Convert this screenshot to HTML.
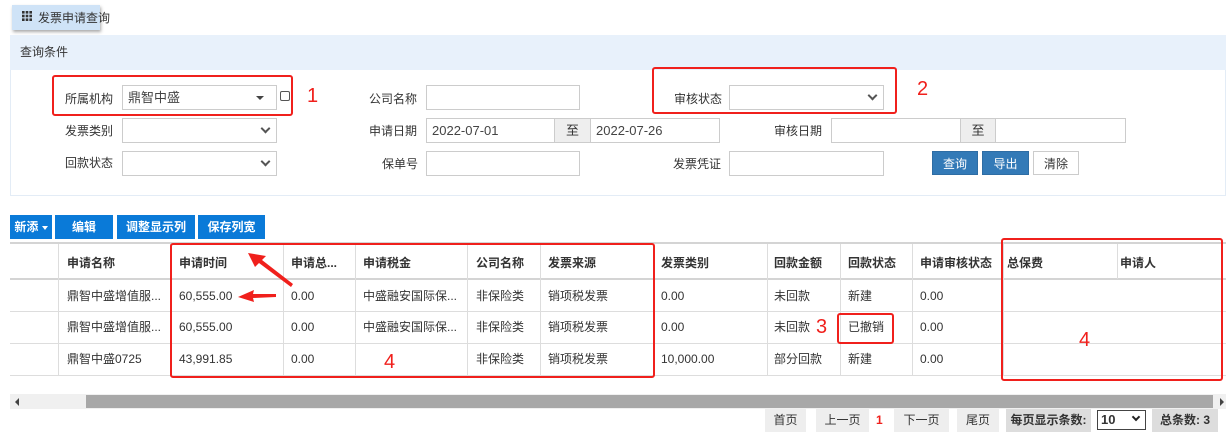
<!DOCTYPE html>
<html><head><meta charset="utf-8">
<style>
*{box-sizing:border-box;margin:0;padding:0}
body{width:1232px;height:441px;background:#fff;font-family:"Liberation Sans","Noto Sans CJK SC",sans-serif;font-size:12px;color:#333;position:relative;overflow:hidden}
.a{position:absolute}
.inp{position:absolute;border:1px solid #ccc;background:#fff;height:25px;padding-left:5px;line-height:23px;font-size:13px;color:#444}
.lbl{position:absolute;font-size:12px;color:#333;line-height:14px}
.chev{position:absolute;right:7px;top:7px;width:7px;height:7px;border-right:2px solid #555;border-bottom:2px solid #555;transform:rotate(45deg)}
.to{position:absolute;background:#eee;border:1px solid #ccc;height:25px;text-align:center;line-height:23px;font-size:13px}
.btn{position:absolute;height:24px;line-height:24px;text-align:center;color:#fff;font-size:12px}
.red{position:absolute;border:2px solid #f0201c;border-radius:3px}
.num{position:absolute;color:#f0201c;font-size:20px;line-height:20px}
.c{position:absolute;font-size:12px;line-height:14px;white-space:nowrap}
.h{font-weight:bold;color:#333}
.vl{position:absolute;width:1px;background:#ddd;top:244px;height:132px}
.hl{position:absolute;left:10px;width:1216px;background:#ddd}
.pg{position:absolute;top:409px;height:23px;line-height:23px;text-align:center;background:#eee;font-size:12px}
</style></head><body>
<div class="a" style="left:12px;top:5px;width:88px;height:25px;background:#cfe3f7;box-shadow:1px 2px 3px #aaa"></div>
<svg class="a" style="left:22px;top:11px" width="10" height="10"><g fill="#333"><rect x="0" y="0" width="2.6" height="2.6"/><rect x="3.7" y="0" width="2.6" height="2.6"/><rect x="7.4" y="0" width="2.6" height="2.6"/><rect x="0" y="3.7" width="2.6" height="2.6"/><rect x="3.7" y="3.7" width="2.6" height="2.6"/><rect x="7.4" y="3.7" width="2.6" height="2.6"/><rect x="0" y="7.4" width="2.6" height="2.6"/><rect x="3.7" y="7.4" width="2.6" height="2.6"/><rect x="7.4" y="7.4" width="2.6" height="2.6"/></g></svg>
<div class="lbl" style="left:38px;top:11px">发票申请查询</div>

<div class="a" style="left:10px;top:35px;width:1216px;height:161px;border:1px solid #e3ecf6;background:#fff"></div>
<div class="a" style="left:10px;top:35px;width:1216px;height:35px;background:#e8f1fb"></div>
<div class="lbl" style="left:20px;top:45px">查询条件</div>

<div class="lbl" style="left:65px;top:92px">所属机构</div>
<div class="inp" style="left:122px;top:85px;width:155px">鼎智中盛<span class="a" style="right:12px;top:10px;border-left:4px solid transparent;border-right:4px solid transparent;border-top:4px solid #444"></span></div>
<div class="a" style="left:280px;top:91px;width:10px;height:10px;border:1px solid #555;border-radius:2px"></div>
<div class="red" style="left:52px;top:75px;width:241px;height:41px"></div>
<div class="num" style="left:307px;top:86px">1</div>

<div class="lbl" style="left:369px;top:92px">公司名称</div>
<div class="inp" style="left:426px;top:85px;width:154px"></div>
<div class="lbl" style="left:674px;top:92px">审核状态</div>
<div class="inp" style="left:729px;top:85px;width:155px"><div class="chev" style="top:6px"></div></div>
<div class="red" style="left:652px;top:67px;width:245px;height:47px"></div>
<div class="num" style="left:917px;top:79px">2</div>

<div class="lbl" style="left:65px;top:124px">发票类别</div>
<div class="inp" style="left:122px;top:118px;width:155px"><div class="chev" style="top:6px"></div></div>
<div class="lbl" style="left:369px;top:124px">申请日期</div>
<div class="inp" style="left:426px;top:118px;width:129px">2022-07-01</div>
<div class="to" style="left:554px;top:118px;width:37px">至</div>
<div class="inp" style="left:590px;top:118px;width:130px">2022-07-26</div>
<div class="lbl" style="left:774px;top:124px">审核日期</div>
<div class="inp" style="left:831px;top:118px;width:130px"></div>
<div class="to" style="left:960px;top:118px;width:36px">至</div>
<div class="inp" style="left:995px;top:118px;width:131px"></div>

<div class="lbl" style="left:65px;top:156px">回款状态</div>
<div class="inp" style="left:122px;top:151px;width:155px"><div class="chev" style="top:6px"></div></div>
<div class="lbl" style="left:382px;top:157px">保单号</div>
<div class="inp" style="left:426px;top:151px;width:154px"></div>
<div class="lbl" style="left:673px;top:157px">发票凭证</div>
<div class="inp" style="left:729px;top:151px;width:155px"></div>
<div class="btn" style="left:932px;top:151px;width:46px;background:#337ab7;border:1px solid #2e6da4">查询</div>
<div class="btn" style="left:982px;top:151px;width:47px;background:#337ab7;border:1px solid #2e6da4">导出</div>
<div class="btn" style="left:1033px;top:151px;width:46px;background:#fff;border:1px solid #ccc;color:#333">清除</div>

<div class="btn" style="left:10px;top:215px;width:42px;background:#0a7ad8;font-weight:bold">新添 <span style="display:inline-block;border-left:3px solid transparent;border-right:3px solid transparent;border-top:4px solid #fff;vertical-align:middle"></span></div>
<div class="btn" style="left:55px;top:215px;width:58px;background:#0a7ad8;font-weight:bold">编辑</div>
<div class="btn" style="left:117px;top:215px;width:78px;background:#0a7ad8;font-weight:bold">调整显示列</div>
<div class="btn" style="left:198px;top:215px;width:67px;background:#0a7ad8;font-weight:bold">保存列宽</div>

<div class="hl" style="top:242px;height:2px;background:#d4d4d4"></div>
<div class="hl" style="top:278px;height:2px;background:#d4d4d4"></div>
<div class="hl" style="top:311px;height:1px"></div>
<div class="hl" style="top:343px;height:1px"></div>
<div class="hl" style="top:375px;height:1px"></div>
<div class="vl" style="left:58px"></div><div class="vl" style="left:170px"></div><div class="vl" style="left:283px"></div><div class="vl" style="left:355px"></div><div class="vl" style="left:467px"></div><div class="vl" style="left:540px"></div><div class="vl" style="left:653px"></div><div class="vl" style="left:767px"></div><div class="vl" style="left:840px"></div><div class="vl" style="left:912px"></div><div class="vl" style="left:1003px"></div><div class="vl" style="left:1117px;height:35px"></div>

<div class="c h" style="left:67px;top:256px">申请名称</div>
<div class="c h" style="left:179px;top:256px">申请时间</div>
<div class="c h" style="left:291px;top:256px">申请总...</div>
<div class="c h" style="left:363px;top:256px">申请税金</div>
<div class="c h" style="left:476px;top:256px">公司名称</div>
<div class="c h" style="left:548px;top:256px">发票来源</div>
<div class="c h" style="left:661px;top:256px">发票类别</div>
<div class="c h" style="left:774px;top:256px">回款金额</div>
<div class="c h" style="left:848px;top:256px">回款状态</div>
<div class="c h" style="left:920px;top:256px">申请审核状态</div>
<div class="c h" style="left:1007px;top:256px">总保费</div>
<div class="c h" style="left:1120px;top:256px">申请人</div>

<div class="c" style="left:67px;top:289px">鼎智中盛增值服...</div>
<div class="c" style="left:179px;top:289px">60,555.00</div>
<div class="c" style="left:291px;top:289px">0.00</div>
<div class="c" style="left:363px;top:289px">中盛融安国际保...</div>
<div class="c" style="left:476px;top:289px">非保险类</div>
<div class="c" style="left:548px;top:289px">销项税发票</div>
<div class="c" style="left:661px;top:289px">0.00</div>
<div class="c" style="left:774px;top:289px">未回款</div>
<div class="c" style="left:848px;top:289px">新建</div>
<div class="c" style="left:920px;top:289px">0.00</div>

<div class="c" style="left:67px;top:320px">鼎智中盛增值服...</div>
<div class="c" style="left:179px;top:320px">60,555.00</div>
<div class="c" style="left:291px;top:320px">0.00</div>
<div class="c" style="left:363px;top:320px">中盛融安国际保...</div>
<div class="c" style="left:476px;top:320px">非保险类</div>
<div class="c" style="left:548px;top:320px">销项税发票</div>
<div class="c" style="left:661px;top:320px">0.00</div>
<div class="c" style="left:774px;top:320px">未回款</div>
<div class="c" style="left:848px;top:320px">已撤销</div>
<div class="c" style="left:920px;top:320px">0.00</div>

<div class="c" style="left:67px;top:352px">鼎智中盛0725</div>
<div class="c" style="left:179px;top:352px">43,991.85</div>
<div class="c" style="left:291px;top:352px">0.00</div>
<div class="c" style="left:476px;top:352px">非保险类</div>
<div class="c" style="left:548px;top:352px">销项税发票</div>
<div class="c" style="left:661px;top:352px">10,000.00</div>
<div class="c" style="left:774px;top:352px">部分回款</div>
<div class="c" style="left:848px;top:352px">新建</div>
<div class="c" style="left:920px;top:352px">0.00</div>

<div class="red" style="left:170px;top:243px;width:485px;height:135px"></div>
<div class="red" style="left:1001px;top:238px;width:222px;height:143px"></div>
<div class="red" style="left:837px;top:313px;width:57px;height:31px"></div>
<div class="num" style="left:816px;top:317px">3</div>
<div class="num" style="left:384px;top:352px">4</div>
<div class="num" style="left:1079px;top:330px">4</div>
<svg class="a" style="left:0;top:0" width="1232" height="441"><g fill="#f0201c"><polygon points="248,253 266,256 262,260 293,284 291,287 259,263 255,267"/><polygon points="238,297 254,290 253,294 276,294 276,297 253,298 254,302"/></g></svg>

<div class="a" style="left:10px;top:394px;width:1216px;height:15px;background:#f0f0f0"></div>
<div class="a" style="left:86px;top:395px;width:1127px;height:13px;background:#a8a8a8"></div>
<div class="a" style="left:15px;top:398px;border-top:4px solid transparent;border-bottom:4px solid transparent;border-right:4px solid #444"></div>
<div class="a" style="left:1220px;top:398px;border-top:4px solid transparent;border-bottom:4px solid transparent;border-left:4px solid #444"></div>

<div class="pg" style="left:765px;width:41px">首页</div>
<div class="pg" style="left:816px;width:53px">上一页</div>
<div class="a" style="left:876px;top:413px;color:#f0201c;font-weight:bold;font-size:12px">1</div>
<div class="pg" style="left:894px;width:55px">下一页</div>
<div class="pg" style="left:957px;width:42px">尾页</div>
<div class="pg" style="left:1006px;width:85px;background:#ddd;font-weight:bold">每页显示条数:</div>
<div class="a" style="left:1097px;top:410px;width:49px;height:20px;border:1px solid #444;font-weight:bold;font-size:13px;line-height:18px;padding-left:3px">10<div class="chev" style="top:3px;right:6px;border-color:#222;width:6px;height:6px"></div></div>
<div class="pg" style="left:1152px;width:66px;background:#ddd;font-weight:bold">总条数: 3</div>
</body></html>
